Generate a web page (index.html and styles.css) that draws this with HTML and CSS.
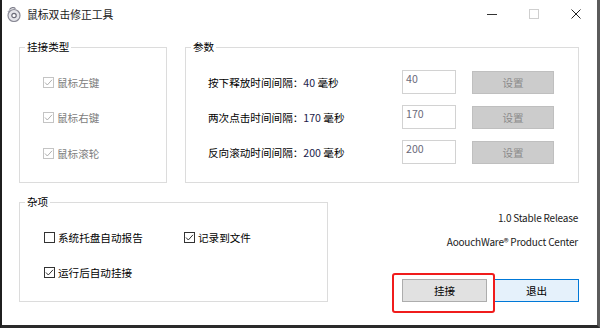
FILE: index.html
```html
<!DOCTYPE html>
<html lang="zh-CN">
<head>
<meta charset="utf-8">
<title>鼠标双击修正工具</title>
<link rel="stylesheet" href="styles.css">
</head>
<body>
<div class="window">
  <div class="titlebar">
    <svg class="app-icon" viewBox="0 0 16 16" width="16" height="16">
      <circle cx="8" cy="9.5" r="6" fill="#e4e4ea" stroke="#8a8a96" stroke-width="1.2"/>
      <circle cx="8" cy="9.5" r="2.2" fill="#fff" stroke="#6a6a78" stroke-width="1.2"/>
      <path d="M3.5 3.5 C5 1.2 8 1 9.5 2.6" fill="none" stroke="#7a7a88" stroke-width="1.2"/>
      <path d="M2 6 C2.5 4.5 3.5 4 4.5 4.2" fill="none" stroke="#9a9aa8" stroke-width="1"/>
    </svg>
    <span class="title">鼠标双击修正工具</span>
    <div class="caption-buttons">
      <span class="cap"><svg width="10" height="10" viewBox="0 0 10 10"><line x1="0" y1="5.5" x2="10" y2="5.5" stroke="#333" stroke-width="1"/></svg></span>
      <span class="cap"><svg width="10" height="10" viewBox="0 0 10 10"><rect x="0.5" y="0.5" width="9" height="9" fill="none" stroke="#cfcfcf" stroke-width="1"/></svg></span>
      <span class="cap"><svg width="10" height="10" viewBox="0 0 10 10"><path d="M0.5 0.5 L9.5 9.5 M9.5 0.5 L0.5 9.5" fill="none" stroke="#222" stroke-width="1"/></svg></span>
    </div>
  </div>

  <div class="client">
    <div class="top-row">
      <div class="group g-hook">
        <span class="group-title">挂接类型</span>
        <div class="check-list">
          <label class="check-row disabled"><span class="cb checked"><svg viewBox="0 0 11 11" width="11" height="11"><path d="M2 5.5 L4.3 8 L9 2.8" fill="none" stroke="currentColor" stroke-width="1"/></svg></span>鼠标左键</label>
          <label class="check-row disabled"><span class="cb checked"><svg viewBox="0 0 11 11" width="11" height="11"><path d="M2 5.5 L4.3 8 L9 2.8" fill="none" stroke="currentColor" stroke-width="1"/></svg></span>鼠标右键</label>
          <label class="check-row disabled"><span class="cb checked"><svg viewBox="0 0 11 11" width="11" height="11"><path d="M2 5.5 L4.3 8 L9 2.8" fill="none" stroke="currentColor" stroke-width="1"/></svg></span>鼠标滚轮</label>
        </div>
      </div>

      <div class="group g-params">
        <span class="group-title">参数</span>
        <div class="param-grid">
          <span class="param-label">按下释放时间间隔：<span class="val">40</span> 毫秒</span>
          <span class="edit">40</span>
          <span class="btn-disabled">设置</span>

          <span class="param-label">两次点击时间间隔：<span class="val">170</span> 毫秒</span>
          <span class="edit">170</span>
          <span class="btn-disabled">设置</span>

          <span class="param-label">反向滚动时间间隔：<span class="val">200</span> 毫秒</span>
          <span class="edit">200</span>
          <span class="btn-disabled">设置</span>
        </div>
      </div>
    </div>

    <div class="bottom-row">
      <div class="group g-misc">
        <span class="group-title">杂项</span>
        <div class="misc-grid">
          <label class="check-row"><span class="cb"></span>系统托盘自动报告</label>
          <label class="check-row"><span class="cb checked"><svg viewBox="0 0 11 11" width="11" height="11"><path d="M2 5.5 L4.3 8 L9 2.8" fill="none" stroke="currentColor" stroke-width="1"/></svg></span>记录到文件</label>
          <label class="check-row"><span class="cb checked"><svg viewBox="0 0 11 11" width="11" height="11"><path d="M2 5.5 L4.3 8 L9 2.8" fill="none" stroke="currentColor" stroke-width="1"/></svg></span>运行后自动挂接</label>
        </div>
      </div>

      <div class="about">
        <div class="info">1.0 Stable Release</div>
        <div class="info second">AoouchWare® Product Center</div>
        <div class="actions">
          <span class="highlight"><span class="btn">挂接</span></span>
          <span class="btn btn-default">退出</span>
        </div>
      </div>
    </div>
  </div>
</div>
</body>
</html>
```

FILE: styles.css
```css
* { box-sizing: border-box; }

body {
  margin: 0;
  background: #fff;
  font-family: "Noto Sans CJK SC", "Noto Sans", sans-serif;
  font-size: 10.6px;
  color: #000;
}

.window {
  width: 600px;
  height: 328px;
  background: #fff;
  border-left: 2px solid #1f1f1f;
  border-right: 3px solid #5b5b5b;
  border-bottom: 3px solid #2a2a2a;
  display: flex;
  flex-direction: column;
}

/* title bar */
.titlebar {
  height: 27px;
  display: flex;
  align-items: center;
}

.app-icon {
  margin-left: 4px;
  flex: none;
}

.title {
  margin-left: 5px;
  font-size: 10.8px;
  color: #1a1a1a;
}

.caption-buttons {
  margin-left: auto;
  display: flex;
  align-self: stretch;
}

.cap {
  width: 42px;
  display: flex;
  align-items: center;
  justify-content: center;
}

/* client area */
.client {
  padding: 20px 18px 0 17px;
  display: flex;
  flex-direction: column;
}

.top-row {
  display: flex;
  gap: 18px;
}

.group {
  position: relative;
  border: 1px solid #dcdcdc;
}

.group-title {
  position: absolute;
  top: -9px;
  left: 5px;
  padding: 0 2px;
  background: #fff;
  line-height: 16px;
}

.g-hook {
  width: 148px;
  height: 136px;
  padding: 26px 0 0 23px;
}

.check-list {
  display: flex;
  flex-direction: column;
  gap: 19.5px;
}

.check-row {
  display: flex;
  align-items: center;
  height: 16px;
  gap: 3px;
  white-space: nowrap;
}

.cb {
  width: 11px;
  height: 11px;
  border: 1px solid #333;
  background: #fff;
  color: #333;
  display: inline-flex;
  align-items: center;
  justify-content: center;
  flex: none;
}

.cb svg { display: block; margin: -1px; }

.check-row.disabled { color: #7d7d7d; }
.check-row.disabled .cb { border-color: #c4c4c4; color: #b0b0b0; }

.g-params {
  width: 394px;
  height: 136px;
  padding: 22px 0 0 22px;
}

.param-grid {
  display: grid;
  grid-template-columns: 178px 54px 82px;
  grid-auto-rows: 24px;
  column-gap: 16px;
  row-gap: 11px;
  align-items: center;
}

.param-label { white-space: nowrap; }
.val { color: #1c1c4a; }

.edit {
  height: 24px;
  border: 1px solid #d2d2d2;
  padding: 1px 3px;
  line-height: 14px;
  color: #6a6a7a;
}

.btn-disabled {
  height: 23px;
  background: #cccccc;
  border: 1px solid #bfbfbf;
  color: #8a8a8a;
  display: flex;
  align-items: center;
  justify-content: center;
}

/* bottom */
.bottom-row {
  margin-top: 19px;
  display: flex;
}

.g-misc {
  width: 309px;
  height: 100px;
  padding: 26px 0 0 24px;
}

.misc-grid {
  display: grid;
  grid-template-columns: 140px auto;
  row-gap: 19px;
}

.about {
  flex: 1;
  display: flex;
  flex-direction: column;
  align-items: flex-end;
}

.info {
  line-height: 16px;
  margin-top: 8px;
  padding-right: 1px;
  color: #1a1a1a;
  font-size: 10px;
  letter-spacing: -0.2px;
}

.info.second { margin-top: 8px; }

.actions {
  margin-top: 29px;
  display: flex;
  gap: 7px;
}

.highlight {
  position: relative;
  display: flex;
}

.highlight::after {
  content: "";
  position: absolute;
  left: -10px;
  top: -6px;
  width: 99px;
  height: 36px;
  border: 2px solid #f01c1c;
  border-radius: 3px;
}

.btn {
  width: 85px;
  height: 23px;
  background: #e1e1e1;
  border: 1px solid #adadad;
  display: flex;
  align-items: center;
  justify-content: center;
}

.btn-default {
  background: #e5f1fb;
  border-color: #0078d7;
}
```
